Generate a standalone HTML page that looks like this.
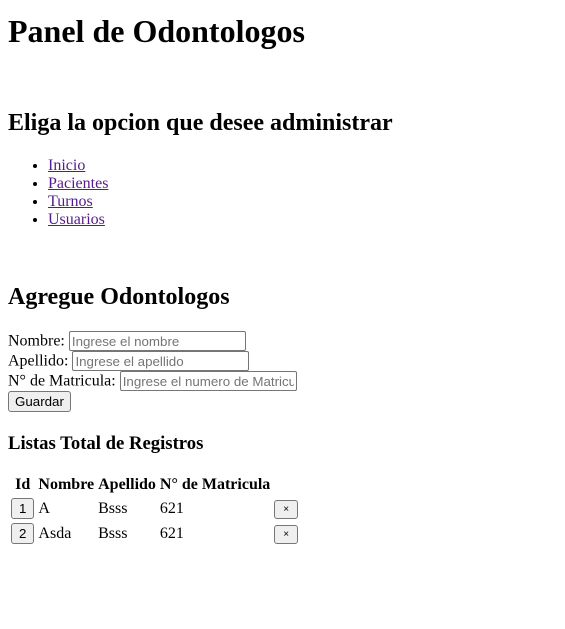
<!DOCTYPE html>
<html><head><meta charset="utf-8"><style>
body{margin:8px;font-family:"Liberation Serif",serif;font-size:16px;color:#000;background:#fff}
h1{font-size:32px;margin:13px 0 21px}
h2{font-size:24px;margin:20px 0}
h3{font-size:18.7px;margin:21px 0 18px}
ul{margin:16px 0;padding-left:40px}
a{color:#551a8b}
input{font-family:"Liberation Sans",sans-serif;font-size:13.33px;border:1px solid #767676;border-radius:2px;padding:1px 2px;width:171px;height:16px;vertical-align:baseline}
input::placeholder{color:#757575}
button{font-family:"Liberation Sans",sans-serif;font-size:13.33px;background:#efefef;border:1px solid #767676;border-radius:3px;padding:2px 6px}
table{border-spacing:2px;margin-top:13px}
th,td{padding:1px;text-align:left}
th{text-align:center}
td button{padding:2px 7px}
.x{font-size:10px;padding:3px 8px}
</style></head><body>
<h1>Panel de Odontologos</h1>
<h2 style="margin-top:60px">Eliga la opcion que desee administrar</h2>
<ul><li><a href="#">Inicio</a></li><li><a href="#">Pacientes</a></li><li><a href="#">Turnos</a></li><li><a href="#">Usuarios</a></li></ul>
<h2 style="margin-top:55px">Agregue Odontologos</h2>
<div>Nombre: <input placeholder="Ingrese el nombre"></div>
<div>Apellido: <input placeholder="Ingrese el apellido"></div>
<div>N° de Matricula: <input placeholder="Ingrese el numero de Matricula"></div>
<button>Guardar</button>
<h3>Listas Total de Registros</h3>
<table>
<tr><th>Id</th><th>Nombre</th><th>Apellido</th><th>N° de Matricula</th><th></th></tr>
<tr><td><button>1</button></td><td>A</td><td>Bsss</td><td>621</td><td><button class="x">×</button></td></tr>
<tr><td><button>2</button></td><td>Asda</td><td>Bsss</td><td>621</td><td><button class="x">×</button></td></tr>
</table>
</body></html>
